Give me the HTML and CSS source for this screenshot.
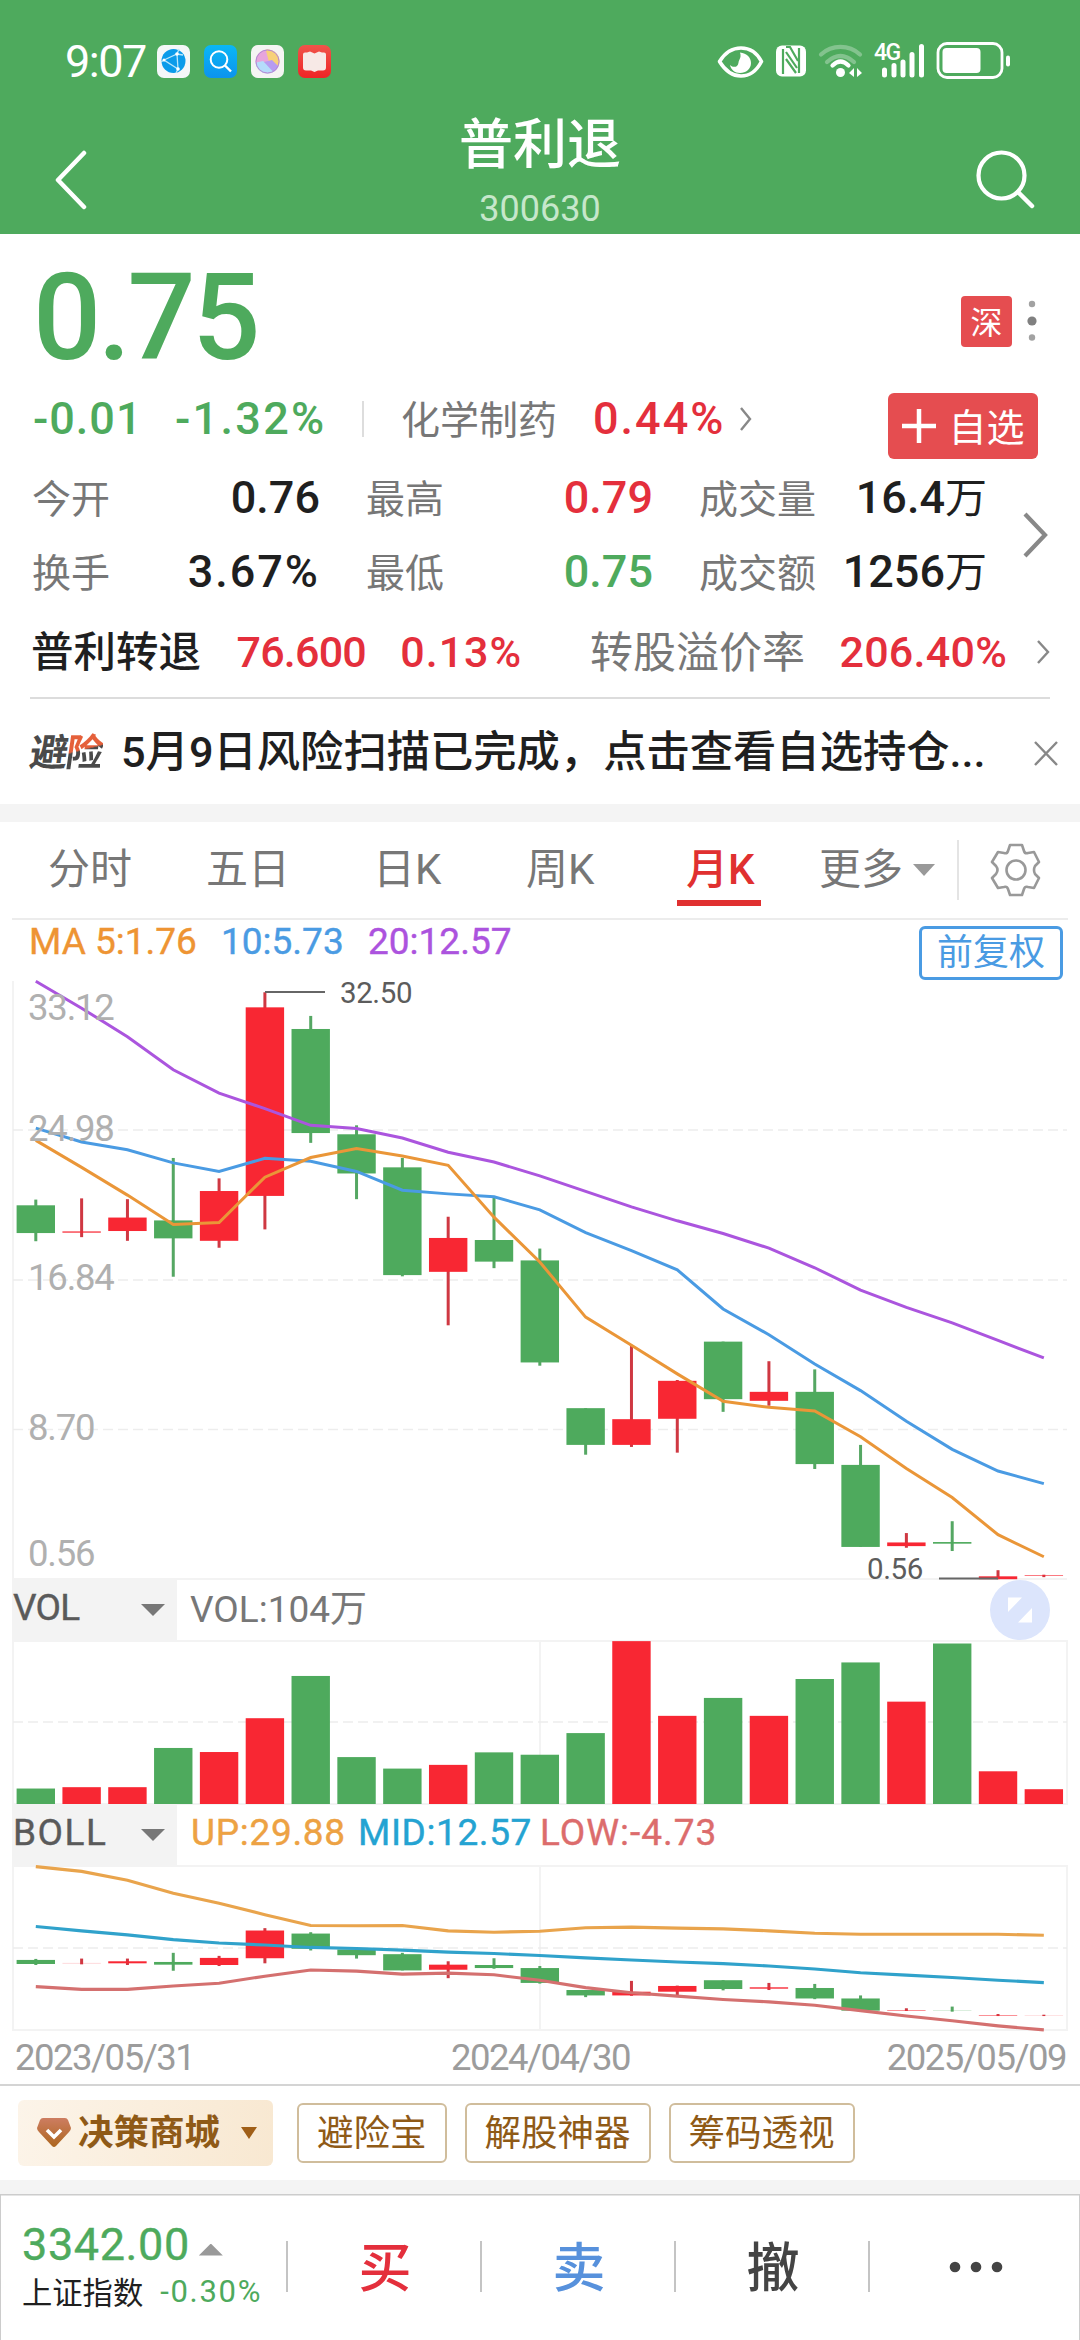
FILE: index.html
```html
<!DOCTYPE html>
<html lang="zh-CN">
<head>
<meta charset="utf-8">
<title>普利退 300630</title>
<link rel="stylesheet" href="styles.css">
</head>
<body>
<header class="header">
  <div class="status">
    <span class="time">9:07</span>
    <div class="apps">
      <svg width="33" height="33" viewBox="0 0 33 33"><rect width="33" height="33" rx="7" fill="#f4f7f8"/><circle cx="16.500" cy="16" r="12" fill="#0a9bea"/><path d="M7 15 20 9l1 15zM20 9l2-5M21 24l-2 4M7 15l-3 2M20 9l6 1" fill="none" stroke="#b8e6fb" stroke-width="1.300"/><circle cx="7" cy="15" r="1.500" fill="#fff"/><circle cx="20" cy="9" r="1.800" fill="#fff"/><circle cx="21" cy="24" r="1.800" fill="#fff"/></svg>
      <svg width="33" height="33" viewBox="0 0 33 33"><defs><linearGradient id="sk" x2="0" y2="1"><stop stop-color="#0ab7f5"/><stop offset="1" stop-color="#0c93ee"/></linearGradient></defs><rect width="33" height="33" rx="7" fill="url(#sk)"/><circle cx="15" cy="14.500" r="8.300" fill="none" stroke="#fff" stroke-width="2"/><path d="m21 20.500 6 6" stroke="#fff" stroke-width="2.400"/></svg>
      <svg width="33" height="33" viewBox="0 0 33 33"><defs><clipPath id="orb"><circle cx="16.500" cy="16.500" r="12"/></clipPath></defs><rect width="33" height="33" rx="7" fill="#f4f5f3"/><g clip-path="url(#orb)"><rect width="33" height="33" fill="#e7a5dc"/><path d="M14 2h18v20L18 17z" fill="#f7d178"/><path d="M3 18l9-2 10 8 6 8H3z" fill="#b5dcfb"/><path d="m13 17 8-2 8 8-3 8z" fill="#b79cf0"/></g><circle cx="16.500" cy="16.500" r="11.500" fill="none" stroke="#b48ad4"/></svg>
      <svg width="33" height="33" viewBox="0 0 33 33"><defs><linearGradient id="bk" x2="0" y2="1"><stop stop-color="#f0544a"/><stop offset="1" stop-color="#ef2426"/></linearGradient></defs><rect width="33" height="33" rx="7" fill="url(#bk)"/><path d="M7 7.500h2l3-1 4.500 2 4.500-2 3 1h2q2 0 2 2v13q0 3-3 3h-5l-3.500 1.500-3.500-1.500H8q-3 0-3-3v-13q0-2 2-2z" fill="#f7e9e6"/></svg>
    </div>
    <div class="signals">
      <svg width="318" height="44" viewBox="0 0 318 44" fill="#fff">
        <path d="M2.500 22.500C9 12 17 9 24 9s15 3 20.500 13.500C39 33 31 37 24 37S9 33 2.500 22.500z" fill="none" stroke="#fff" stroke-width="3.600" stroke-linejoin="round"/><path d="M23 13.500c7 1 11 5 11 10.500 0 6-5 10-11 10-5.500 0-9-3.500-10-8 2 2 5 2.500 7 1 2-1.800 1-4 2.500-6.500 1-2 1.500-4 .500-7z"/>
        <rect x="59" y="6.500" width="30" height="31" rx="6"/><path d="M66 10v25M82 9v25" stroke="#4eaa5d" stroke-width="2.200"/><path d="m69 13 11 16M69 20l10 14M69 8l4 0 8 14" stroke="#4eaa5d" stroke-width="2.200" fill="none"/>
        <g fill="none" stroke="#fff" stroke-width="4.200" stroke-linecap="round"><path d="M104 15.500a29 29 0 0 1 39 0M110 23q13.500-12 27 0" opacity=".3"/><path d="M115.500 26.500q8-8 16 0"/></g><circle cx="123.500" cy="33.500" r="4.500"/><path d="m132 34 5-5v9zM145 34l-5-5v9z"/>
        <text x="157" y="20.500" class="net">4G</text>
        <g stroke="#fff" stroke-width="5" stroke-linecap="round"><path d="M167.500 31v5M177 26.500V36M186 23v13M195 15.500V36M204.500 7.500V36"/></g>
        <rect x="221" y="4.500" width="64" height="34" rx="9" fill="none" stroke="#fff" stroke-width="2.800"/><rect x="225.500" y="9" width="38" height="25" rx="4"/><rect x="289" y="16.500" width="4" height="11" rx="2"/>
      </svg>
    </div>
  </div>
  <nav class="nav">
    <svg class="back" width="36" height="60" viewBox="0 0 36 60"><path d="M31 3 5 30l26 27" fill="none" stroke="#fff" stroke-width="4.500" stroke-linecap="round" stroke-linejoin="round"/></svg>
    <div class="titles"><h1>普利退</h1><p>300630</p></div>
    <svg class="find" width="62" height="62" viewBox="0 0 62 62"><circle cx="27.500" cy="26.500" r="23" fill="none" stroke="#fff" stroke-width="4.200"/><path d="m44 43 14 14" stroke="#fff" stroke-width="4.500" stroke-linecap="round"/></svg>
  </nav>
</header>

<section class="quote">
  <div class="price-row">
    <span class="price">0.75</span>
    <div class="market"><span class="badge">深</span>
      <svg width="10" height="44" viewBox="0 0 10 44"><circle cx="5" cy="5" r="3.200" fill="#a2a2a2"/><circle cx="5" cy="22" r="4.600" fill="#808080"/><circle cx="5" cy="38.500" r="3.200" fill="#a2a2a2"/></svg></div>
  </div>
  <div class="change-row">
    <span class="num green chg">-0.01</span><span class="num green pct">-1.32%</span><i class="bar"></i>
    <span class="label">化学制药</span><span class="num red wide ind">0.44%</span>
    <svg class="chev" width="14" height="26" viewBox="0 0 14 26"><path d="m2 2 9 11-9 11"/></svg>
    <button class="add"><svg width="36" height="36" viewBox="0 0 36 36"><path d="M18 1v34M1 18h34" stroke="#fff" stroke-width="4.500"/></svg><span>自选</span></button>
  </div>
  <div class="stats">
    <span class="label">今开</span><span class="num v">0.76</span><span class="label">最高</span><span class="num red v">0.79</span><span class="label">成交量</span><span class="num v last">16.4<small>万</small></span>
    <span class="label">换手</span><span class="num wide v">3.67%</span><span class="label">最低</span><span class="num green v">0.75</span><span class="label">成交额</span><span class="num v last">1256<small>万</small></span>
    <svg class="chev more" width="28" height="48" viewBox="0 0 28 48"><path d="m3 3 20 21L3 45"/></svg>
  </div>
  <div class="bond">
    <span class="bname">普利转退</span><span class="bnum b1">76.600</span><span class="bnum b2">0.13%</span><span class="blabel">转股溢价率</span><span class="bnum b3">206.40%</span>
    <svg class="chev" width="14" height="26" viewBox="0 0 14 26"><path d="m2 2 10 11L2 24"/></svg>
  </div>
  <div class="notice">
    <span class="tag">避<span>险</span></span><span class="msg">5月9日风险扫描已完成，点击查看自选持仓...</span>
    <svg class="chev" width="24" height="26" viewBox="0 0 24 26"><path d="m1 2 22 23M23 2 1 25"/></svg>
  </div>
</section>

<nav class="tabs">
  <span>分时</span><span>五日</span><span>日K</span><span>周K</span><span class="on">月K</span><span class="drop">更多<i class="tri"></i></span>
  <i class="sep"></i>
  <svg width="54" height="56" viewBox="0 0 54 56" fill="none" stroke="#999" stroke-width="2.600" stroke-linejoin="round"><path d="M21 3h12l2 6q1 3 4 2l6-1 5 10-4 4q-2 4 0 8l4 4-5 10-6-1q-3-1-4 2l-2 6H21l-2-6q-1-3-4-2l-6 1-6-10 4-4q3-4 0-8l-4-4 6-10 6 1q3 1 4-2z"/><circle cx="27" cy="28" r="9.500"/></svg>
</nav>

<section class="charts">
  <div class="ma"><span class="o">MA 5:1.76</span><span class="b">10:5.73</span><span class="p">20:12.57</span><button class="adj">前复权</button></div>
  <svg id="kline" class="panel" width="1080" height="599" viewBox="0 981 1080 599"></svg>
  <div class="ind-row">
    <div class="picker">VOL<i class="tri dark"></i></div><span class="volv">VOL:104万</span>
    <svg class="expand" width="60" height="60" viewBox="0 0 60 60"><circle cx="30" cy="30" r="30" fill="#dce5fc"/><path d="M18 17.500h14L18 32zM42 28v14.500H28z" fill="#fff"/></svg>
  </div>
  <svg id="vol" class="panel" width="1080" height="165" viewBox="0 1640 1080 165"></svg>
  <div class="ind-row">
    <div class="picker wide2">BOLL<i class="tri dark"></i></div><span class="up">UP:29.88</span><span class="mid">MID:12.57</span><span class="low">LOW:-4.73</span>
  </div>
  <svg id="boll" class="panel" width="1080" height="166" viewBox="0 1865 1080 166"></svg>
  <div class="dates"><span>2023/05/31</span><span>2024/04/30</span><span>2025/05/09</span></div>
</section>

<section class="tools">
  <button class="mall"><svg width="34" height="30" viewBox="0 0 34 30"><defs><linearGradient id="gem" x2="0" y2="1"><stop stop-color="#cd7d61"/><stop offset="1" stop-color="#ad661e"/></linearGradient></defs><path d="M6 0h22q2 0 3 2l3 8q0 2-2 4L19 28q-2 2-4 0L2 14q-2-2-2-4l3-8q1-2 3-2z" fill="url(#gem)"/><path d="m10 12 7 7 7-7" fill="none" stroke="#fff" stroke-width="3.600"/></svg><b>决策商城</b><i class="tri brown"></i></button>
  <button>避险宝</button><button>解股神器</button><button>筹码透视</button>
</section>

<footer class="trade">
  <div class="index">
    <div class="idx-top"><span>3342.00</span><i class="tri upw"></i></div>
    <div class="idx-sub"><span>上证指数</span><em>-0.30%</em></div>
  </div>
  <div class="act red"><span>买</span></div><div class="act blue"><span>卖</span></div><div class="act dark2"><span>撤</span></div>
  <div class="act"><svg width="54" height="12" viewBox="0 0 54 12" fill="#444"><circle cx="6" cy="6" r="5.300"/><circle cx="27" cy="6" r="5.300"/><circle cx="48" cy="6" r="5.300"/></svg></div>
</footer>
<script src="script.js"></script>
</body>
</html>
```
FILE: styles.css
```css
* { box-sizing: border-box; margin: 0; padding: 0; }
body { width: 1080px; background: #fff; font-family: Roboto, "Noto Sans CJK SC", sans-serif; color: #1f1f1f; white-space: nowrap; }
svg { display: block; flex: none; }
button { border: 0; background: none; font: inherit; white-space: nowrap; }
i { font-style: normal; flex: none; }

.header { height: 234px; background: #4eaa5d; color: #fff; }
.status { height: 100px; padding: 22px 45px 0 65px; display: flex; align-items: center; }
.time { width: 92px; font-size: 45px; letter-spacing: -1.500px; }
.apps { display: flex; gap: 14px; }
.signals { margin-left: auto; }
.net { font: 500 23px Roboto, sans-serif; letter-spacing: -1.500px; }
.nav { height: 134px; padding: 0 44px 0 53px; display: grid; grid-template-columns: 1fr auto 1fr; }
.back { margin-top: 50px; }
.find { margin: 49px 0 0 auto; }
.titles { padding-top: 16px; text-align: center; margin-left: -9px; }
.titles h1 { font-size: 54px; line-height: 60px; font-weight: 500; }
.titles p { margin-top: 11px; font-size: 36px; line-height: 44px; color: #c6e7cb; }

.quote { padding: 0 30px; height: 570px; }
.red { color: #e42f3c; }
.green { color: #4eaa5d; }
.price-row { height: 159px; padding: 8px 0 0 3px; display: flex; justify-content: space-between; align-items: center; }
.price { font-size: 120px; line-height: 150px; font-weight: 500; color: #4eaa5d; letter-spacing: -3.500px; }
.market { display: flex; align-items: center; gap: 15px; margin: 7px 13px 0 0; }
.badge { width: 51px; height: 51px; border-radius: 4px; background: #e54d50; color: #fff; font-size: 32px; line-height: 54px; text-align: center; }
.num { font-size: 45px; line-height: 50px; font-weight: 500; }
.num small { font-size: 42px; font-weight: 400; }
.wide { letter-spacing: 2px; }
.label { font-size: 39px; line-height: 50px; color: #777; padding-top: 3px; }
.change-row { height: 66px; display: flex; align-items: center; padding: 0 12px 0 3px; }
.change-row > :not(.add) { margin-bottom: 14px; }
.chg { width: 142px; letter-spacing: 1px; }
.pct { width: 187px; letter-spacing: 2.300px; }
.bar { width: 2px; height: 36px; background: #ddd; margin-right: 37px; }
.ind { margin-left: 36px; width: 146px; }
.chev { fill: none; stroke: #888; stroke-width: 2.400; }
.add { margin-left: auto; width: 150px; height: 66px; border-radius: 6px; background: #e54d50; color: #fff; font-size: 38px; line-height: 66px; display: flex; align-items: center; justify-content: center; gap: 11px; }
.add span { padding-top: 3px; }
.stats { position: relative; margin: 2px 0 0 2px; height: 148px; display: grid; grid-template-columns: 76px 212px 122px 211px 165px 1fr; grid-auto-rows: 74px; align-items: center; }
.stats .v { text-align: right; }
.stats .last { padding-right: 63px; }
.stats .label:nth-child(6n+3), .stats .label:nth-child(6n+5) { padding-left: 46px; }
.more { position: absolute; right: 0; top: 50px; stroke-width: 4.200; }
.bond { height: 90px; padding-bottom: 2px; padding-left: 1px; display: flex; align-items: center; border-bottom: 2px solid #dcdcdc; }
.bond, .notice { font-size: 43px; line-height: 50px; }
.bname { width: 206px; font-size: 42.500px; font-weight: 500; padding-top: 2px; }
.bnum { font-weight: 500; color: #e42f3c; }
.b1 { width: 164px; letter-spacing: -.800px; }
.b2 { width: 190px; letter-spacing: 1px; }
.blabel { width: 250px; color: #777; padding-top: 2px; }
.b3 { width: 197px; letter-spacing: .300px; }
.notice { height: 103px; padding-top: 4px; display: flex; align-items: center; }
.tag { width: 91px; flex: none; font-size: 38px; letter-spacing: -2px; font-weight: 700; color: #4a4a4a; transform: skewX(-8deg); }
.tag span { background: linear-gradient(165deg, #e5603a 43%, #4a4a4a 44%); -webkit-background-clip: text; background-clip: text; color: transparent; }
.msg { width: 913px; flex: none; font-size: 43.300px; font-weight: 500; }

.tabs { border-top: 18px solid #f4f4f4; height: 114px; padding: 0 37px 0 48px; display: grid; grid-template-columns: 158px 167px 153px 149px 144px 138px 32px 1fr; align-items: center; font-size: 42px; line-height: 84px; color: #777; }
.tabs span { height: 84px; margin-top: 0; }
.tabs .on { color: #e03030; position: relative; font-weight: 500; margin-left: 11px; }
.tabs .on::after { content: ""; position: absolute; left: -9px; top: 72px; width: 84px; height: 6px; background: #e03030; }
.drop { display: flex; align-items: center; gap: 10px; }
.tri { width: 22px; height: 12px; background: #999; clip-path: polygon(0 0, 100% 0, 50% 100%); }
.tri.dark { width: 24px; background: #777; }
.tri.brown { width: 16px; height: 12px; background: #a05f18; }
.tri.upw { width: 24px; clip-path: polygon(50% 0, 100% 100%, 0 100%); }
.sep { width: 2px; height: 60px; background: #e4e4e4; }
.tabs svg { margin-left: auto; }

.charts { height: 1168px; border-bottom: 2px solid #d4d4d4; }
.ma { margin: 0 12px; height: 63px; border-top: 2px solid #ececec; padding: 0 5px 0 17px; display: flex; align-items: flex-start; font-size: 37px; line-height: 44px; }
.ma span { -webkit-text-stroke: .400px currentColor; }
.o { color: #ee9433; width: 192px; }
.b { color: #4a9be3; width: 147px; }
.p { color: #ac53de; }
.adj { margin: 6px 0 0 auto; width: 144px; height: 54px; border: 3px solid #4a9be3; border-radius: 6px; color: #4a9be3; font-size: 36px; line-height: 49px; }
.panel { overflow: visible; }
.panel text { font-family: Roboto, sans-serif; }
.axis { font-size: 36.500px; fill: #b0b0b0; letter-spacing: -1.200px; }
.mark { font-size: 29.500px; fill: #5c5c5c; letter-spacing: -.400px; }
.ind-row { height: 60px; padding: 0 30px 0 12px; display: flex; align-items: center; font-size: 37px; line-height: 52px; }
.ind-row span { margin-top: -4px; -webkit-text-stroke: .400px currentColor; }
.picker { width: 165px; height: 60px; padding: 0 12px 4px 1px; background: #f3f3f3; color: #5a5a5a; -webkit-text-stroke: .400px #5a5a5a; display: flex; align-items: center; justify-content: space-between; letter-spacing: -.800px; }
.picker .tri { margin-top: 4px; }
.picker.wide2 { letter-spacing: 1.500px; }
.ind-row .volv { margin: -1px auto 0 13px; color: #777; -webkit-text-stroke: 0; }
.up { color: #eda243; margin-left: 14px; width: 167px; letter-spacing: .700px; }
.mid { color: #24a3d2; width: 182px; letter-spacing: .600px; }
.low { color: #dc6c6c; letter-spacing: 1px; }
.dates { height: 53px; padding: 0 14px 0 15px; display: flex; justify-content: space-between; font-size: 36.500px; line-height: 53px; letter-spacing: -1.500px; color: #9c9c9c; }

.tools { height: 94px; padding: 0 18px; display: flex; align-items: center; }
.tools button { height: 60px; margin-right: 18px; padding: 0 18px; border: 2px solid #d0bd9c; border-radius: 6px; color: #8f5a17; font-size: 36.500px; line-height: 57px; }
.tools .mall { width: 255px; height: 66px; margin-right: 24px; border: 0; background: linear-gradient(100deg, #fcf4e9, #f8e8d1); display: flex; align-items: center; padding: 0 16px 0 19px; }
.mall b { font-size: 35.500px; font-weight: 700; margin-left: 7px; flex: 1; text-align: left; }

.trade { height: 160px; border-top: 14px solid #f4f4f4; box-shadow: inset 0 1.500px #ccc, inset 1px 0 #ccc, inset -1px 0 #ccc; display: grid; grid-template-columns: 286px 194px 194px 194px 1fr; }
.index { padding: 24px 0 0 22px; }
.idx-top { display: flex; align-items: center; gap: 9px; font-size: 45px; line-height: 54px; color: #4eaa5d; letter-spacing: .600px; -webkit-text-stroke: .400px #4eaa5d; }
.idx-top i { margin-top: 9px; }
.idx-sub { display: flex; align-items: center; font-size: 30.300px; line-height: 40px; }
.idx-sub span { padding-top: 2px; }
.idx-sub em { font-style: normal; font-size: 31px; margin: -2px 0 0 17px; color: #4eaa5d; letter-spacing: 1.700px; }
.act { height: 51px; margin-top: 47px; border-left: 2.500px solid #c4c4c4; font-size: 53px; line-height: 51px; font-weight: 500; display: flex; align-items: center; justify-content: center; padding-left: 2px; }
.act span { padding-top: 5px; }
.blue { color: #5791dc; }
.dark2 { color: #444; }
```
FILE: script.js
```js
const RED = '#f82733', GREEN = '#4eaa5d';
const X0 = 35.8, STEP = 45.82, W = 38.4;
const dirs = 'grrgrrgggrgggrrgrggrgrr';

// [high, body top, body bottom, low] for each month
const candles = [
  [587,601,669,689],[584,665,668,679],[586,631,664,688],[485,638,682,776],[535,566,688,705],
  [79,116,578,660],[137,169,424,448],[405,427,523,586],[485,508,772,775],[629,681,764,895],
  [578,686,739,755],[707,736,986,994],[1098,1098,1188,1212],[943,1125,1188,1193],[1029,1031,1124,1207],
  [935,935,1076,1107],[983,1058,1080,1092],[1003,1058,1235,1247],[1188,1237,1438,1438],
  [1404,1427,1436,1440],[1375,1426,1430,1448],[1495,1510,1517,1517],[1506,1507,1508.500,1512]];
const ma20 = [52,118,188,269,326,364,405,413,436,471,495,529,567,605,639,670,706,754,809,851,889,932,975];
const ma10 = [412,446,465,497,518,486,493,518,564,573,580,612,668,712,759,855,918,990,1055,1130,1199,1252,1283];
const ma5 = [442,508,576,648,643,532,484,462,480,503,630,740,875,944,1014,1081,1096,1105,1168,1246,1317,1408,1462];
const volume = [676,672,672,556,568,468,343,583,617,606,569,576,512,240,461,408,461,352,303,419,247,625,678];
const bollCandles = [
  [1180,1183,1195,1198],[1179,1192,1192.500,1196],[1179,1187,1193,1198],[1162,1189,1197,1215],[1171,1177,1198,1201],
  [1089,1096,1178,1193],[1101,1105,1150,1155],[1148,1152,1169,1179],[1162,1166,1214,1214],[1187,1197,1212,1237],
  [1178,1198,1207,1209],[1201,1207,1251,1253],[1272,1272,1288,1293],[1245,1277,1288,1289],[1259,1260,1277,1287],
  [1243,1243,1269,1273],[1251,1264,1268,1272],[1254,1266,1297,1299],[1288,1297,1333,1333],[1326,1332,1333.500,1334],
  [1321,1332,1332.600,1336],[1343,1347,1348.500,1349],[1345,1346,1346.400,1349]];
const up = [907,921,947,986,1015,1049,1081,1082,1081,1097,1101,1098,1088,1086,1089,1091,1097,1104,1107,1107,1107,1107,1110];
const mid = [1084,1097,1109,1123,1133,1139,1146,1149,1154,1160,1164,1170,1177,1183,1189,1194,1201,1210,1221,1228,1235,1243,1250];
const low = [1262,1270,1270,1260,1252,1231,1213,1216,1225,1222,1227,1243,1265,1280,1290,1300,1307,1317,1333,1349,1363,1378,1390];

const yMain = v => 960 + v / 2.45;
const ySub = v => 1560 + v / 2.958;
const x = i => X0 + i * STEP;
const rect = (l, t, w, h, c) => `<rect x="${l}" y="${t}" width="${w}" height="${h}" fill="${c}"/>`;
const color = i => dirs[i] === 'r' ? RED : GREEN;
const sticks = (data, y) => data.map(([h, t, b, l], i) =>
  rect(x(i) - 1.5, y(h), 3, y(l) - y(h), dirs[i] === 'r' ? '#cf3842' : '#55a763') +
  rect(x(i) - W / 2, y(t), W, y(b) - y(t), color(i))).join('');
const line = (data, y, c, w) =>
  `<polyline fill="none" stroke="${c}" stroke-width="${w}" points="${data.map((v, i) => x(i) + ',' + y(v)).join(' ')}"/>`;
const dash = y => `<path d="M13 ${y}H1067" stroke="#ededed" stroke-width="1.5" stroke-dasharray="10 5"/>`;
const rule = d => `<path d="${d}" stroke="#f3f3f3" stroke-width="2" fill="none"/>`;
const text = (cls, tx, ty, s) => `<text class="${cls}" x="${tx}" y="${ty}">${s}</text>`;

document.getElementById('kline').innerHTML =
  rule('M13 981V1579H1067') + dash(1130) + dash(1280) + dash(1429.5) +
  sticks(candles, yMain) +
  line(ma20, yMain, '#ab55de', 3) + line(ma10, yMain, '#4a9be3', 3) + line(ma5, yMain, '#ea9638', 3) +
  '<path d="M265 992H325M939 1578.500H998" stroke="#666" stroke-width="1.800"/>' +
  text('mark', 340, 1002.5, '32.50') + text('mark', 867, 1578.5, '0.56') +
  text('axis', 28, 1020, '33.12') + text('axis', 28, 1141, '24.98') + text('axis', 28, 1290, '16.84') +
  text('axis', 28, 1440, '8.70') + text('axis', 28, 1566, '0.56');

document.getElementById('vol').innerHTML =
  rule('M13 1641H1067V1804H13ZM540 1641V1804') + dash(1722) +
  volume.map((v, i) => rect(x(i) - W / 2, ySub(v), W, 1804 - ySub(v), color(i))).join('');

document.getElementById('boll').innerHTML =
  rule('M13 1866H1067V2030H13ZM540 1866V2030') + dash(1948) + sticks(bollCandles, ySub) +
  line(up, ySub, '#e9a44c', 3.1) + line(mid, ySub, '#30a2cb', 3.1) + line(low, ySub, '#d4706f', 3.1);
```
